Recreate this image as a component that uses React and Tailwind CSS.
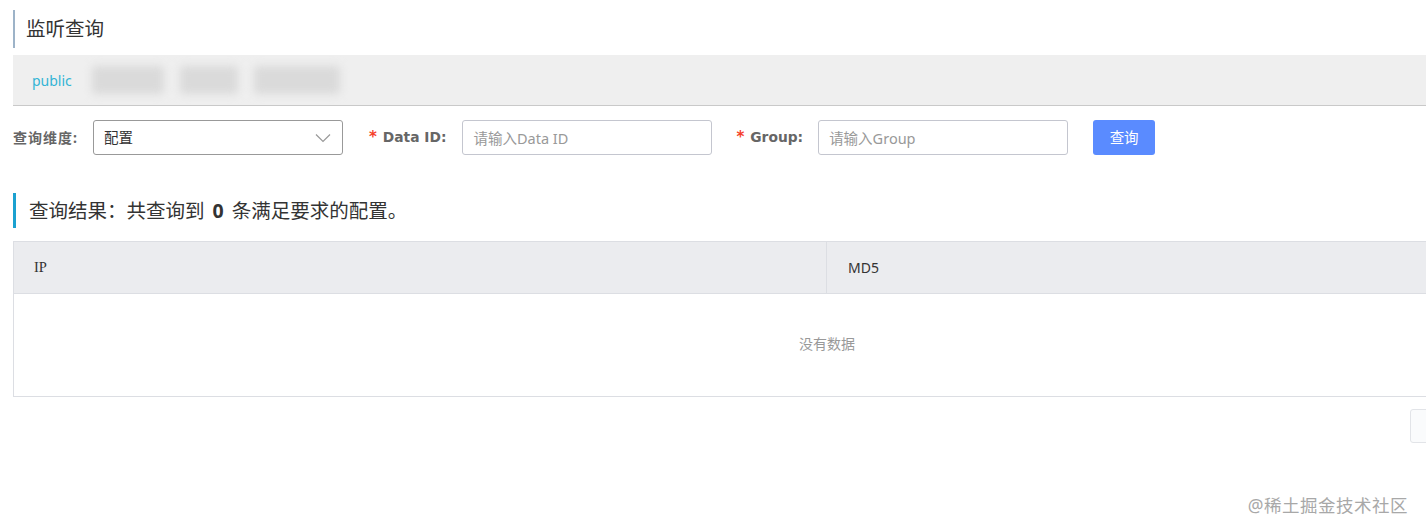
import React from 'react';

const cjk = "font-['Noto_Sans','Noto_Sans_CJK_SC',sans-serif]";

function Field({ label, placeholder, gap }) {
  return (
    <div className="flex items-center">
      <span className="text-[15px] font-bold text-[#f5402a] mr-[6px] font-['DejaVu_Sans',sans-serif]">*</span>
      <label className={`text-[13.8px] font-bold text-[#666] font-['DejaVu_Sans',sans-serif] ${gap}`}>{label}</label>
      <input
        className={`w-[250px] h-[35px] border border-[#c4c6cf] rounded-[3px] px-[10px] text-[14.5px] text-[#333] placeholder:text-[#999] outline-none ${cjk}`}
        placeholder={placeholder}
      />
    </div>
  );
}

export default function App() {
  return (
    <div className={`relative w-[1426px] h-[531px] overflow-hidden bg-white pl-[13px] ${cjk}`}>
      {/* 标题 */}
      <div className="pt-[10px]">
        <div className="h-[38px] border-l-2 border-[#9db3c8] pl-[11px] flex items-center text-[19.5px] text-[#333]">
          监听查询
        </div>
      </div>

      {/* 命名空间 */}
      <div className="mt-[7px] w-[1628px] h-[51px] bg-[#efefef] border-b border-[#c9c9c9] flex items-center pl-[19px]">
        <span className="text-[14px] text-[#33b4d5]">public</span>
        <div className="flex items-center gap-[16px] ml-[20px]">
          <div className="w-[72px] h-[28px] bg-[#dadada] blur-[4px] rounded" />
          <div className="w-[58px] h-[28px] bg-[#dadada] blur-[4px] rounded" />
          <div className="w-[86px] h-[28px] bg-[#dadada] blur-[4px] rounded" />
        </div>
      </div>

      {/* 查询条件 */}
      <div className="mt-[14px] flex items-center h-[35px]">
        <label className="text-[14px] tracking-[1px] font-bold text-[#666] w-[80px]">查询维度:</label>
        <div className="w-[250px] h-[35px] border border-[#999] rounded-[3px] flex items-center justify-between pl-[10px] pr-[11px]">
          <span className="text-[14.5px] text-[#333]">配置</span>
          <svg width="16" height="10" viewBox="0 0 16 10" fill="none">
            <polyline points="1,1.5 8,8.5 15,1.5" stroke="#999" strokeWidth="1.2" />
          </svg>
        </div>
        <div className="ml-[26px]">
          <Field label="Data ID:" placeholder="请输入Data ID" gap="mr-[16px]" />
        </div>
        <div className="ml-[24px]">
          <Field label="Group:" placeholder="请输入Group" gap="mr-[15px]" />
        </div>
        <button className="ml-[25px] w-[62px] h-[35px] rounded-[3px] bg-[#5a8bff] text-white text-[14.5px]">
          查询
        </button>
      </div>

      {/* 查询结果 */}
      <div className="mt-[38px] h-[35px] border-l-[3px] border-[#1ba1d0] pl-[13px] flex items-center text-[19.5px] text-[#333]">
        查询结果：共查询到<span className="font-bold mx-[8px]">0</span>条满足要求的配置。
      </div>

      <div className="mt-[13px] w-[1628px] border border-[#dcdee3]">
        <div className="flex h-[52px] bg-[#ebecef] border-b border-[#dcdee3]">
          <div className="w-[813px] border-r border-[#dcdee3] flex items-center pl-[20px] text-[14.5px] text-[#333] font-['Liberation_Serif',serif]">
            IP
          </div>
          <div className="flex-1 flex items-center pl-[21px] text-[14px] text-[#333]">MD5</div>
        </div>
        <div className="h-[102px] flex items-center justify-center pb-[3px] text-[14px] text-[#999]">没有数据</div>
      </div>

      {/* 分页 */}
      <div className="absolute left-[1410px] top-[409px] w-[40px] h-[34px] border border-[#e2e4e8] rounded-[3px] bg-[#fafbfc]" />

      {/* 水印 */}
      <div className="absolute right-[18px] top-[492px] text-[17.5px] text-[#a8a8a8] tracking-[0.5px]">
        @稀土掘金技术社区
      </div>
    </div>
  );
}
